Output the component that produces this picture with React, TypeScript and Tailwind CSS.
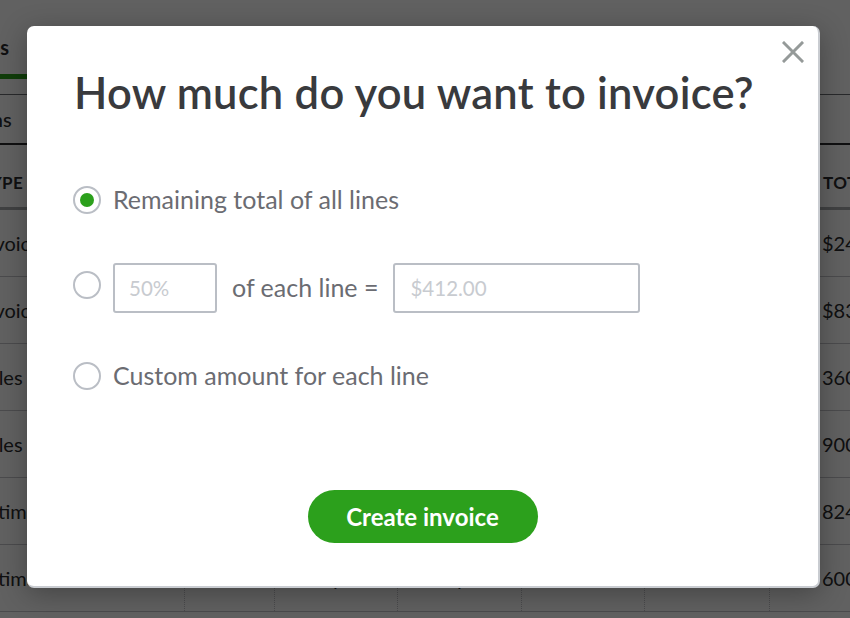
import React from "react";

// ── Background page (dimmed behind the dialog) ─────────────────────────────
const rows = [
    { type: "Invoice", name: "", memo: "", total: "$24" },
    { type: "Invoice", name: "", memo: "", total: "$83" },
    { type: "Sales Receipt", name: "", memo: "", total: "360" },
    { type: "Sales Receipt", name: "", memo: "", total: "900" },
    { type: "Estimate", name: "", memo: "", total: "824" },
    { type: "Estimate", name: "Today", memo: "Today", total: "600" },
];

function BackgroundPage() {
    return (
        <div className="flex flex-col w-full h-full bg-white text-[#2b2c2e]">
            <div className="h-[95px] border-b border-[#6b6c72] flex items-start">
                <div className="mt-[30px] h-[49px] w-[200px] -ml-[150px] border-b-[5px] border-[#2ca01c] flex justify-end pr-[41px] text-[20px] font-bold leading-[34px]">
                    Transactions
                </div>
            </div>
            <div className="h-[50px] border-b-2 border-[#2b2c2e] flex items-center -ml-[55px] text-[20px] font-medium">
                Actions
            </div>
            <div className="h-[65px] flex items-end pb-[12px] border-b-[3px] border-[#a9abae] text-[17px] font-bold tracking-wide">
                <div className="w-[205px] shrink-0 -ml-[20px]">TYPE</div>
                <div className="w-[585px] shrink-0" />
                <div className="shrink-0 pl-[53px]">TOTAL</div>
            </div>
            {rows.map((r, i) => (
                <div key={i} className="h-[67px] shrink-0 flex items-center border-b border-[#c4c6ca] text-[20px] whitespace-nowrap">
                    <div className="w-[205px] shrink-0 -ml-[20px] -indent-[2px] h-full flex items-center border-r border-dotted border-[#c4c6ca]">{r.type}</div>
                    <div className="w-[90px] shrink-0 h-full border-r border-dotted border-[#c4c6ca]" />
                    <div className="w-[123px] shrink-0 h-full border-r border-dotted border-[#c4c6ca] flex items-center justify-end pr-[55px]">{r.name}</div>
                    <div className="w-[124px] shrink-0 h-full border-r border-dotted border-[#c4c6ca] flex items-center justify-end pr-[55px]">{r.memo}</div>
                    <div className="w-[123px] shrink-0 h-full border-r border-dotted border-[#c4c6ca]" />
                    <div className="w-[125px] shrink-0 h-full border-r border-dotted border-[#c4c6ca]" />
                    <div className="flex-1 h-full flex items-center pl-[52px]">{r.total}</div>
                </div>
            ))}
        </div>
    );
}

// ── Dialog pieces ──────────────────────────────────────────────────────────
function Radio({ checked, offset }: { checked?: boolean; offset?: boolean }) {
    return (
        <span
            className={
                offset
                    ? "w-[28px] h-[28px] shrink-0 -mt-[6px] rounded-full border-2 border-[#babec5] bg-white flex items-center justify-center"
                    : "w-[28px] h-[28px] shrink-0 rounded-full border-2 border-[#babec5] bg-white flex items-center justify-center"
            }
        >
            {checked && <span className="w-[14px] h-[14px] rounded-full bg-[#2ca01c]" />}
        </span>
    );
}

function CloseIcon() {
    return (
        <svg width="22" height="22" viewBox="0 0 22 22" fill="none">
            <path d="M2 2L20 20M20 2L2 20" stroke="#959a99" strokeWidth="3" strokeLinecap="square" />
        </svg>
    );
}

export default function App() {
    return (
        <div
            className="relative w-[850px] h-[618px] overflow-hidden"
            style={{ fontFamily: "Lato, 'Open Sans', sans-serif" }}
        >
            <BackgroundPage />
            <div className="absolute inset-0 bg-[#000]/[0.62]" />

            {/* Dialog */}
            <div className="absolute left-[27px] top-[26px] w-[793px] h-[562px] bg-white rounded-[7px] border-r-2 border-b-2 border-[#c9ccd1] shadow-[0_6px_28px_rgba(0,0,0,0.3)] flex flex-col">
                <button className="absolute right-[14px] top-[15px] p-0">
                    <CloseIcon />
                </button>

                <h1 className="pl-[47px] pt-[40px] text-[43.5px] leading-[52px] font-semibold text-[#393a3d] tracking-[0.25px]">
                    How much do you want to invoice?
                </h1>

                <div className="flex flex-col pl-[46px] pt-[38px] text-[25px] text-[#6b6c72]">
                    <label className="h-[88px] flex items-center gap-[12px]">
                        <Radio checked />
                        <span>Remaining total of all lines</span>
                    </label>
                    <label className="h-[88px] flex items-center gap-[12px]">
                        <Radio offset />
                        <span className="w-[104px] h-[50px] shrink-0 border-2 border-[#babec5] rounded-[3px] flex items-center pl-[14px] text-[20.5px] text-[#c8cbd0]">
                            50%
                        </span>
                        <span className="pl-[3px] pr-[3px]">of each line =</span>
                        <span className="w-[247px] h-[50px] shrink-0 border-2 border-[#babec5] rounded-[3px] flex items-center pl-[15px] text-[20.5px] text-[#c8cbd0]">
                            $412.00
                        </span>
                    </label>
                    <label className="h-[88px] flex items-center gap-[12px]">
                        <Radio />
                        <span>Custom amount for each line</span>
                    </label>
                </div>

                <div className="flex justify-center pt-[70px]">
                    <button className="w-[230px] h-[53px] rounded-full bg-[#2ca01c] text-white text-[24px] font-bold">
                        Create invoice
                    </button>
                </div>
            </div>
        </div>
    );
}
